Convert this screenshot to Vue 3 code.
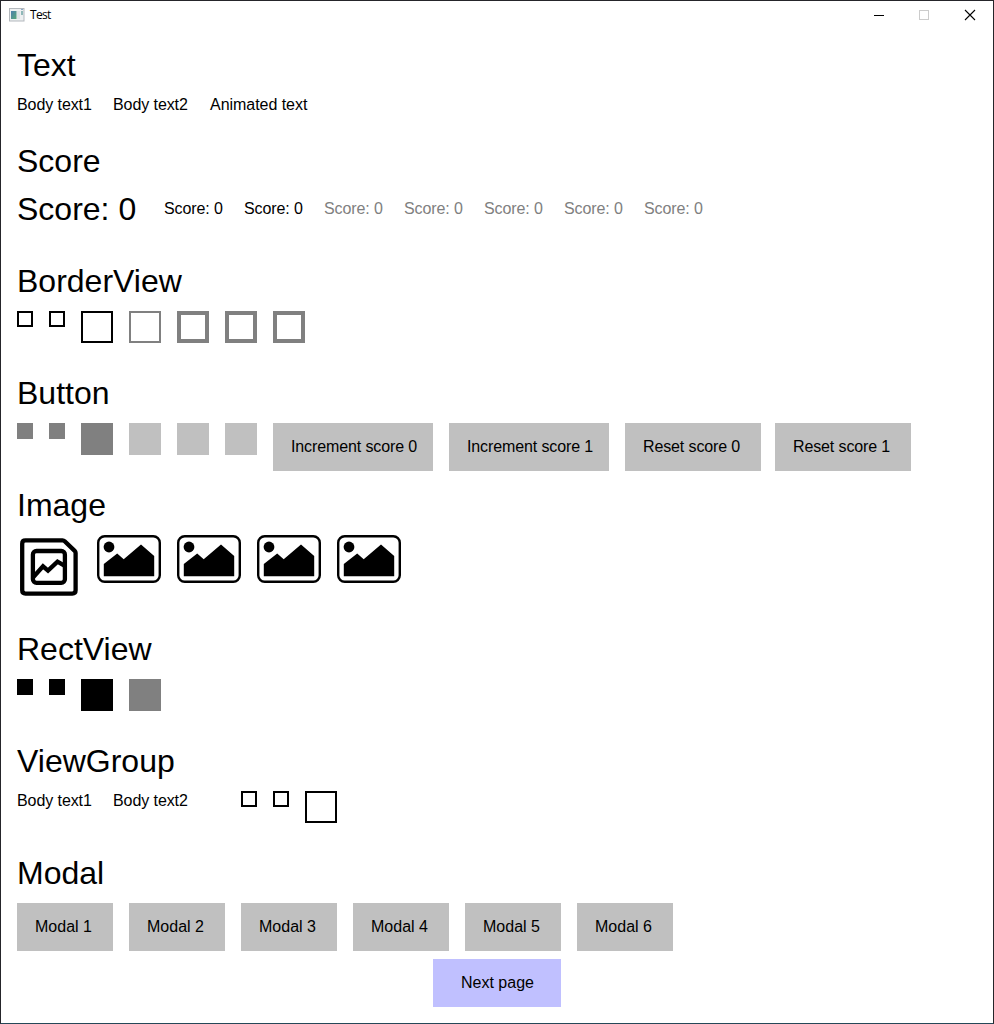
<script setup>
const scores = [0, 1, 2, 3, 4, 5, 6, 7]
const borders = ['small', 'small', '', 'gray', 'gray thick', 'gray thick', 'gray thick']
const swatches = ['small gray', 'small gray', 'gray', 'light', 'light', 'light']
const rects = ['small', 'small', '', 'gray']
</script>

<template>
  <div class="window">
    <header class="titlebar">
      <svg class="app-icon" width="16" height="14" viewBox="0 0 16 14">
        <defs>
          <linearGradient id="pane" x1="0" y1="0" x2="1" y2="1">
            <stop offset="0" stop-color="#4d7fae" />
            <stop offset="1" stop-color="#58a878" />
          </linearGradient>
        </defs>
        <rect x="0.5" y="0.5" width="14.500" height="12.500" fill="#eef0f1" stroke="#b3b8bd" />
        <rect x="2" y="3" width="5.500" height="8" fill="url(#pane)" />
        <rect x="8" y="3" width="3" height="8" fill="#dfe3e6" />
        <rect x="12" y="3" width="2" height="4" fill="#8fb8b8" />
        <rect x="12" y="1" width="2" height="1" fill="#8aa6c8" />
      </svg>
      <span class="title">Test</span>
      <div class="controls">
        <svg width="46" height="28" viewBox="0 0 46 28"><path d="M19 14.5h10" stroke="#000" shape-rendering="crispEdges" /></svg>
        <svg width="46" height="28" viewBox="0 0 46 28"><rect x="18.5" y="9.5" width="9" height="9" fill="none" stroke="#ccc" shape-rendering="crispEdges" /></svg>
        <svg width="46" height="28" viewBox="0 0 46 28"><path d="M18 9l10 10M28 9l-10 10" stroke="#000" stroke-width="1.1" /></svg>
      </div>
    </header>

    <main>
      <section class="h96">
        <h1>Text</h1>
        <div class="row texts">
          <span>Body text1</span><span>Body text2</span><span class="animated">Animated text</span>
        </div>
      </section>

      <section class="h120">
        <h1>Score</h1>
        <div class="row scores">
          <span v-for="n in scores" :key="n" :class="{ big: n === 0, muted: n > 2 }">Score: 0</span>
        </div>
      </section>

      <section class="h112">
        <h1>BorderView</h1>
        <div class="row">
          <i v-for="(b, n) in borders" :key="n" class="outline" :class="b"></i>
        </div>
      </section>

      <section class="h112">
        <h1>Button</h1>
        <div class="row">
          <i v-for="(s, n) in swatches" :key="n" class="block" :class="s"></i>
          <button class="w160">Increment score 0</button>
          <button class="w160">Increment score 1</button>
          <button class="w136">Reset score 0</button>
          <button class="w136 tight">Reset score 1</button>
        </div>
      </section>

      <section class="h144">
        <h1>Image</h1>
        <div class="row">
          <svg width="64" height="64" viewBox="0 0 64 64" fill="none" stroke="#000" stroke-width="4.3" stroke-linejoin="round">
            <path d="M8.500 5.400H45.500Q46.800 5.400 47.700 6.300L57.700 15.900Q58.600 16.800 58.600 18V55.300Q58.600 58.600 55.300 58.600H8.500Q5.200 58.600 5.200 55.300V8.700Q5.200 5.400 8.500 5.400Z" />
            <rect x="15.900" y="16" width="32" height="31.900" rx="3.600" />
            <path d="M16.200 42.200L26 31.300L31 35.600L40.500 26.600L47.800 30.800" stroke-linejoin="miter" />
          </svg>
          <svg v-for="n in 4" :key="n" width="64" height="48" viewBox="0 0 64 48">
            <rect x="1.200" y="1.200" width="61.600" height="45.600" rx="6.500" fill="none" stroke="#000" stroke-width="2.400" />
            <circle cx="12" cy="12" r="5.400" />
            <path d="M6.800 41.200V29L20.200 18.600L26.700 24.200L44 9.500L57.200 21V41.200Z" />
          </svg>
        </div>
      </section>

      <section class="h112">
        <h1>RectView</h1>
        <div class="row">
          <i v-for="(r, n) in rects" :key="n" class="block" :class="r"></i>
        </div>
      </section>

      <section class="h112">
        <h1>ViewGroup</h1>
        <div class="row groups">
          <div class="texts"><span>Body text1</span><span>Body text2</span></div>
          <div class="row">
            <i class="outline small"></i><i class="outline small"></i><i class="outline"></i>
          </div>
        </div>
      </section>

      <section class="h104">
        <h1>Modal</h1>
        <div class="row">
          <button v-for="n in 6" :key="n" class="w96">Modal {{ n }}</button>
        </div>
      </section>

      <button class="next">Next page</button>
    </main>
  </div>
</template>

<style>
body {
  margin: 0;
  background: #fff;
}
</style>

<style scoped>
.window {
  box-sizing: border-box;
  width: 994px;
  height: 1024px;
  border: 1px solid #25252a;
  border-bottom-color: #254858;
  background: #fff;
  color: #000;
  font: 16px/18px "Liberation Sans", Arial, sans-serif;
  overflow: hidden;
}
.titlebar {
  display: flex;
  height: 30px;
  align-items: flex-start;
}
.app-icon {
  margin: 7px 5px 0 8px;
}
.title {
  font: 12px/16px "Open Sans", "Noto Sans", sans-serif;
  letter-spacing: -0.7px;
  margin-top: 6px;
}
.controls {
  display: flex;
  margin-left: auto;
}
main {
  padding: 16px 16px 0;
}
h1 {
  margin: 0;
  height: 48px;
  font-size: 32px;
  font-weight: 400;
  line-height: 37px;
}
.h96 { height: 96px; }
.h104 { height: 104px; }
.h112 { height: 112px; }
.h120 { height: 120px; }
.h144 { height: 144px; }
.row {
  display: flex;
  align-items: flex-start;
  gap: 16px;
}
.texts {
  display: grid;
  grid-template-columns: 96px 97px auto;
  justify-content: start;
  gap: 0;
  padding-top: 1px;
  letter-spacing: -0.08px;
}
.animated { letter-spacing: -0.04px; }
.scores {
  display: grid;
  grid-template-columns: 147px repeat(7, 80px);
  gap: 0;
  align-items: start;
}
.scores span:not(.big) {
  padding-top: 9px;
  letter-spacing: -0.1px;
}
.big {
  font-size: 32px;
  line-height: 37px;
}
.muted { color: #808080; }
.outline {
  box-sizing: border-box;
  width: 32px;
  height: 32px;
  border: 2px solid #000;
}
.outline.gray { border-color: #808080; }
.outline.thick { border-width: 4px; }
.block {
  width: 32px;
  height: 32px;
  background: #000;
}
.block.gray { background: #808080; }
.block.light { background: #c0c0c0; }
.outline.small,
.block.small {
  width: 16px;
  height: 16px;
}
button {
  box-sizing: border-box;
  height: 48px;
  padding: 0 0 0 18px;
  border: 0;
  background: #c0c0c0;
  color: #000;
  font: inherit;
  text-align: left;
  white-space: nowrap;
}
.w96 { width: 96px; }
.w136 { width: 136px; }
.w160 { width: 160px; }
.w136,
.w160 { letter-spacing: -0.12px; }
.tight { margin-left: -2px; }
.groups { gap: 0; }
.groups .texts {
  width: 224px;
  grid-template-columns: 96px auto;
}
.next {
  display: block;
  width: 128px;
  margin-left: 416px;
  padding-left: 28px;
  background: #c0c0ff;
}
</style>
